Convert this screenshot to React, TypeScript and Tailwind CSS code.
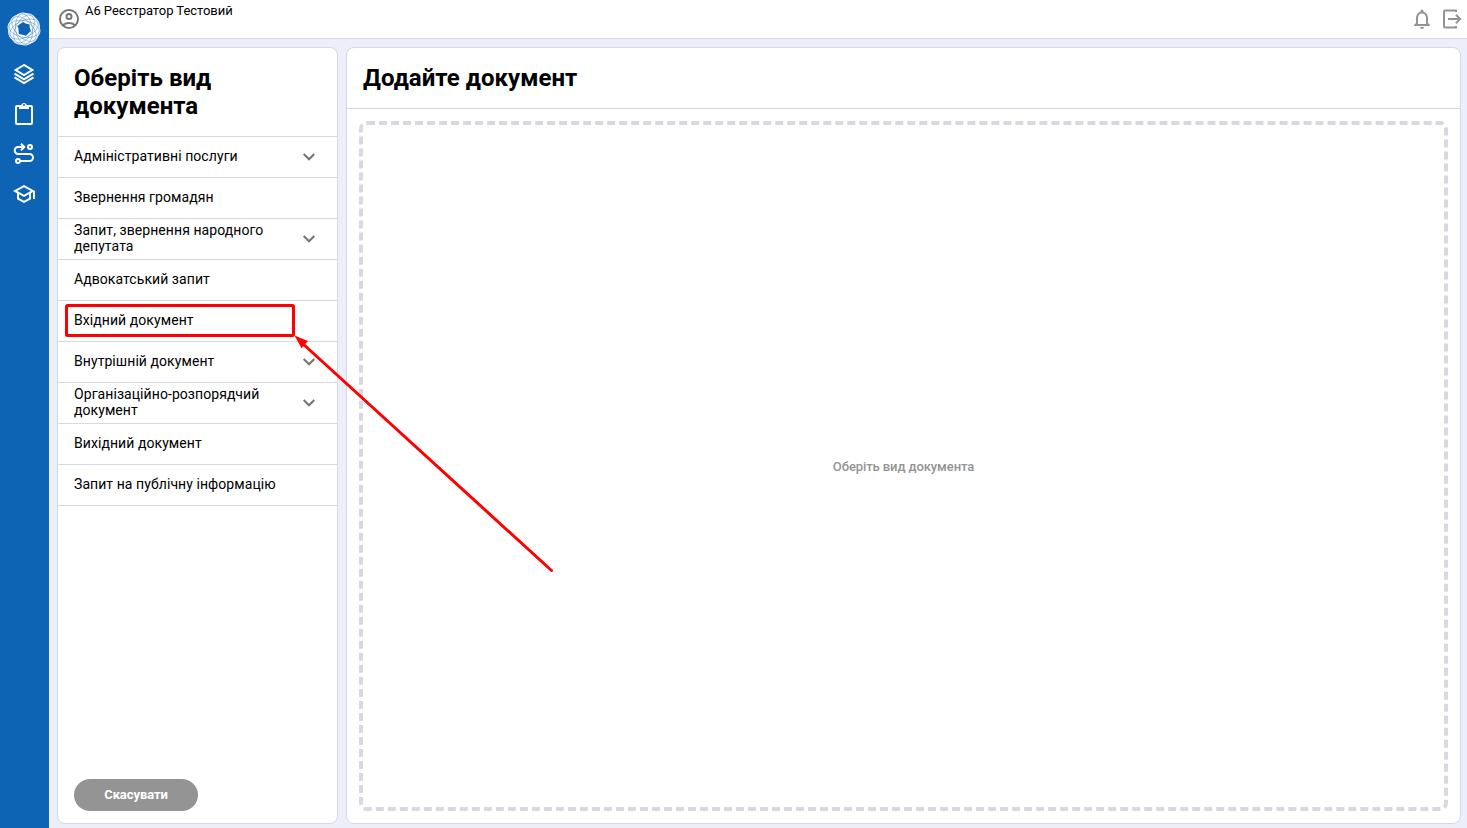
import type { ReactNode } from "react";

const kinds: { label: string; nested?: boolean }[] = [
  { label: "Адміністративні послуги", nested: true },
  { label: "Звернення громадян" },
  { label: "Запит, звернення народного депутата", nested: true },
  { label: "Адвокатський запит" },
  { label: "Вхідний документ" },
  { label: "Внутрішній документ", nested: true },
  { label: "Організаційно-розпорядчий документ", nested: true },
  { label: "Вихідний документ" },
  { label: "Запит на публічну інформацію" },
];

function Icon({ children, className = "size-6" }: { children: ReactNode; className?: string }) {
  return (
    <svg viewBox="0 0 24 24" fill="currentColor" className={className}>
      {children}
    </svg>
  );
}

function Logo() {
  const turns = [10, 46, 82, 118, 154];
  return (
    <svg viewBox="-17 -17 34 34" className="mr-px size-[34px]">
      {turns.map((a) => (
        <ellipse key={a} rx="16.6" ry="12" fill="#fff" opacity=".85" transform={`rotate(${a})`} />
      ))}
      {turns.map((a) => (
        <ellipse key={a} rx="15.4" ry="8.4" fill="none" stroke="#0d63b4" strokeWidth=".6" opacity=".6" transform={`rotate(${a})`} />
      ))}
      <path d="M-1-7 2-5.3 5.5-4.8 5.8-1 7 2 4.3 4.5 2 6.8-1.5 5.8-5.2 5-5.6-1-6.8-2.8-4-5Z" fill="#0d63b4" />
    </svg>
  );
}

function Sidebar() {
  return (
    <aside className="flex w-[49px] shrink-0 flex-col items-center bg-[#0d63b4] pt-3 text-white">
      <Logo />
      <nav className="mt-4 flex flex-col gap-4 pr-px">
        <svg viewBox="0 0 24 24" className="size-6" fill="none" stroke="currentColor" strokeWidth="2">
          <path d="M12 3 3.7 8 12 13l8.3-5L12 3Z" />
          <path d="M2.5 11.7 12 17.3l9.5-5.6M2.5 15.4 12 21l9.5-5.6" />
        </svg>
        <Icon>
          <path d="M19 3h-4.2a3 3 0 0 0-5.6 0H5a2 2 0 0 0-2 2v16a2 2 0 0 0 2 2h14a2 2 0 0 0 2-2V5a2 2 0 0 0-2-2Zm-7-1a1 1 0 1 1 0 2 1 1 0 0 1 0-2Zm7 19H5V5h2v2h10V5h2v16Z" />
        </Icon>
        <svg viewBox="0 0 24 24" className="size-6" fill="none" stroke="currentColor" strokeWidth="2">
          <circle cx="18" cy="5" r="2" />
          <circle cx="6" cy="19" r="2" />
          <path d="M11.5 5H6.2a3.5 3.5 0 0 0 0 7H17.5a3.5 3.5 0 0 1 0 7H8" />
          <path d="m9 1.8 3.2 3.2L9 8.2" />
        </svg>
        <Icon>
          <path d="M12 3 1 9l4 2.18v6L12 21l7-3.82v-6l2-1.09V17h2V9L12 3Zm6.82 6L12 12.72 5.18 9 12 5.28 18.82 9ZM17 16l-5 2.72L7 16v-3.73L12 15l5-2.73V16Z" />
        </Icon>
      </nav>
    </aside>
  );
}

function Header() {
  return (
    <header className="flex h-[39px] shrink-0 justify-between border-b border-[#d6d9e1] bg-white pr-[3px] pl-2">
      <div className="flex pt-[7px]">
        <Icon className="size-6 text-[#757575]">
          <path d="M12 2a10 10 0 1 0 0 20 10 10 0 0 0 0-20ZM7.35 18.5C8.66 17.56 10.26 17 12 17s3.34.56 4.65 1.5a7.95 7.95 0 0 1-9.3 0Zm10.79-1.38a9.95 9.95 0 0 0-12.28 0A7.96 7.96 0 0 1 4 12a8 8 0 1 1 14.14 5.12Z" />
          <path d="M12 6a3.5 3.5 0 1 0 0 7 3.5 3.5 0 0 0 0-7Zm0 5a1.5 1.5 0 1 1 0-3 1.5 1.5 0 0 1 0 3Z" />
        </Icon>
        <span className="-mt-1 ml-1 text-[13px] leading-4 tracking-[-0.05px]">А6 Реєстратор Тестовий</span>
      </div>
      <div className="flex gap-[6px] pt-[7px] text-[#949494]">
        <Icon>
          <path d="M12 22a2 2 0 0 0 2-2h-4a2 2 0 0 0 2 2Zm6-6v-5c0-3.07-1.63-5.64-4.5-6.32V4a1.5 1.5 0 0 0-3 0v.68C7.64 5.36 6 7.92 6 11v5l-2 2v1h16v-1l-2-2Zm-2 1H8v-6c0-2.48 1.51-4.5 4-4.5s4 2.02 4 4.5v6Z" />
        </Icon>
        <Icon>
          <path d="M5 2.5h12V5h-2v-.6H5v15h10V19h2v2.5H5a2 2 0 0 1-2-2v-15a2 2 0 0 1 2-2ZM16.6 7l-1.4 1.4 2.6 2.6H8v2h9.8l-2.6 2.6 1.4 1.4 5-5-5-5Z" />
        </Icon>
      </div>
    </header>
  );
}

function KindsPanel() {
  return (
    <section className="flex w-[281px] shrink-0 flex-col rounded-lg border border-[#d6d9e1] bg-white">
      <h1 className="border-b border-[#d6d9e1] px-4 py-4 text-[24px] leading-7 font-bold tracking-[0.03px]">Оберіть вид документа</h1>
      <ul>
        {kinds.map((k) => (
          <li key={k.label} className="flex h-[41px] items-center justify-between border-b border-[#d6d9e1] px-4 text-[14px] leading-4 tracking-[0.07px]">
            <span className="max-w-[205px] pb-0.5">{k.label}</span>
            {k.nested && (
              <Icon className="size-6 shrink-0 text-[#757575]">
                <path d="M7.41 8.29 12 12.87l4.59-4.58L18 9.7l-6 6-6-6 1.41-1.41Z" />
              </Icon>
            )}
          </li>
        ))}
      </ul>
      <button className="mt-auto mb-3 ml-4 h-8 w-[124px] rounded-full bg-[#949494] text-[13px] font-bold tracking-[-0.08px] text-white">Скасувати</button>
    </section>
  );
}

function DocumentPanel() {
  return (
    <section className="flex min-w-0 flex-1 flex-col rounded-lg border border-[#d6d9e1] bg-white">
      <h2 className="border-b border-[#d6d9e1] p-4 text-[24px] leading-7 font-bold tracking-[0.03px]">Додайте документ</h2>
      <div className="m-3 flex flex-1 items-center justify-center rounded-lg border-4 border-dashed border-[#d6d9e1] pt-0.5 text-[13px] font-medium tracking-[-0.09px] text-[#949494]">
        Оберіть вид документа
      </div>
    </section>
  );
}

export default function App() {
  return (
    <div className="relative flex h-screen overflow-hidden bg-[#eceff9] font-['Roboto',sans-serif] text-black">
      <Sidebar />
      <div className="flex min-w-0 flex-1 flex-col">
        <Header />
        <main className="flex min-h-0 flex-1 gap-2 pt-2 pr-1.5 pb-1 pl-2">
          <KindsPanel />
          <DocumentPanel />
        </main>
      </div>
      <svg className="pointer-events-none absolute inset-0" width="1467" height="828" fill="none" stroke="#f00" strokeWidth="3">
        <rect x="66.5" y="305.5" width="227" height="30" rx="1" />
        <path d="M302 343 551.5 570.5" strokeLinecap="round" />
        <path d="m294.5 335.5 13.5 5.5-6.5 7.2Z" fill="#f00" stroke="none" />
      </svg>
    </div>
  );
}
